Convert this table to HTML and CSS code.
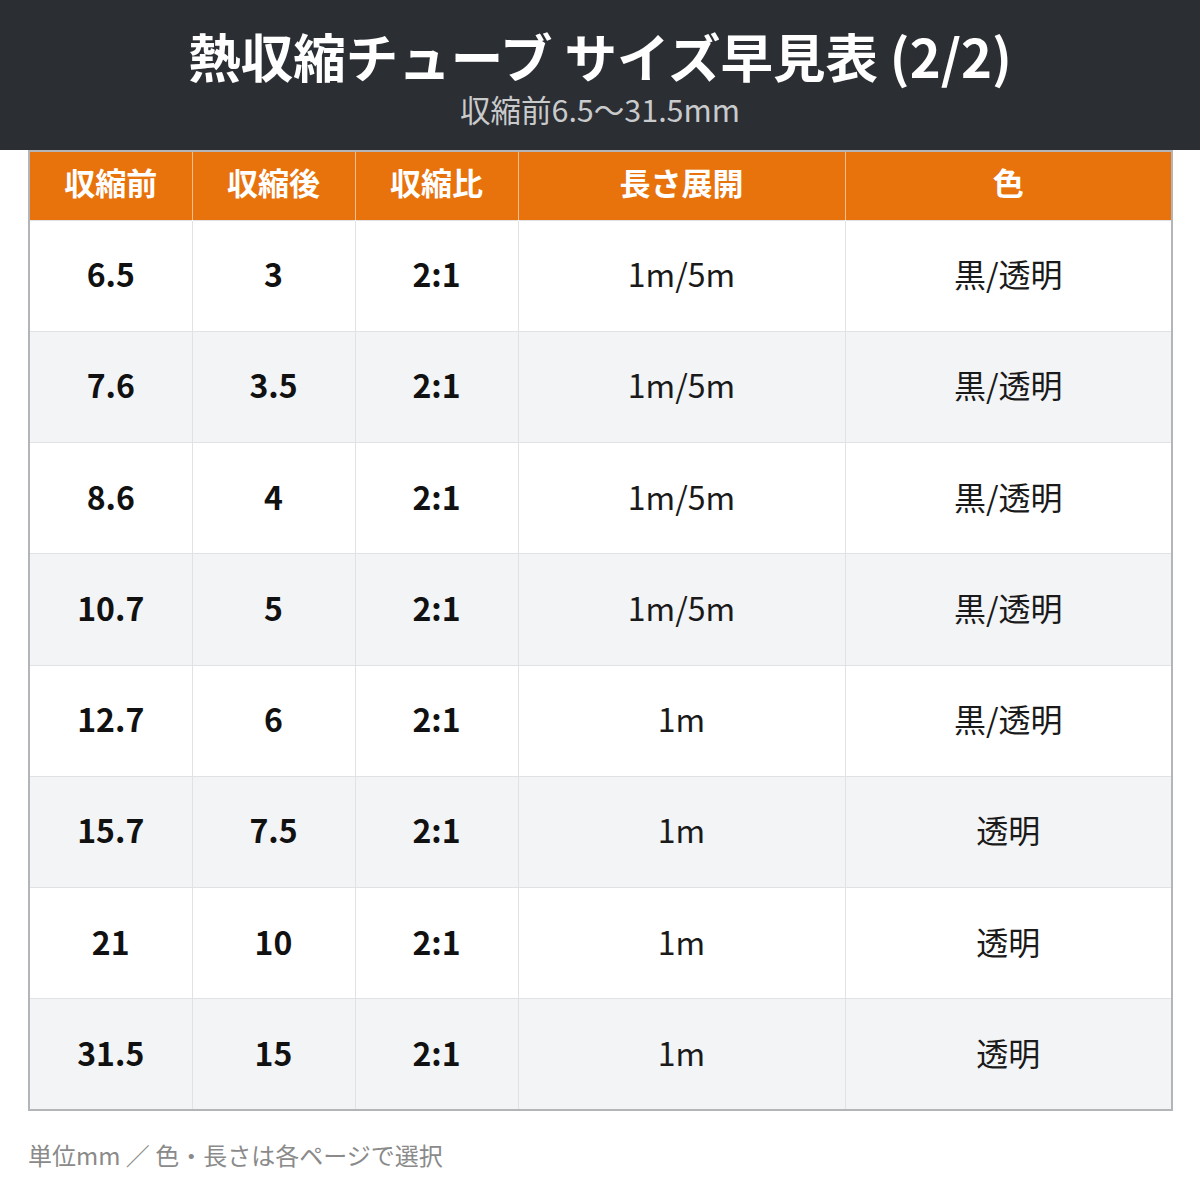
FILE: index.html
```html
<!DOCTYPE html>
<html lang="ja">
<head>
<meta charset="utf-8">
<link rel="stylesheet" href="styles.css">
</head>
<body>
<header class="hero">
  <h1 class="title">熱収縮チューブ サイズ早見表 (2/2)</h1>
  <p class="subtitle">収縮前6.5〜31.5mm</p>
</header>
<table class="sizes">
  <colgroup>
    <col class="c1"><col class="c1"><col class="c1"><col class="c2"><col class="c2">
  </colgroup>
  <thead>
    <tr><th>収縮前</th><th>収縮後</th><th>収縮比</th><th>長さ展開</th><th>色</th></tr>
  </thead>
  <tbody>
    <tr><td class="b">6.5</td><td class="b">3</td><td class="b">2:1</td><td>1m/5m</td><td>黒/透明</td></tr>
    <tr><td class="b">7.6</td><td class="b">3.5</td><td class="b">2:1</td><td>1m/5m</td><td>黒/透明</td></tr>
    <tr><td class="b">8.6</td><td class="b">4</td><td class="b">2:1</td><td>1m/5m</td><td>黒/透明</td></tr>
    <tr><td class="b">10.7</td><td class="b">5</td><td class="b">2:1</td><td>1m/5m</td><td>黒/透明</td></tr>
    <tr><td class="b">12.7</td><td class="b">6</td><td class="b">2:1</td><td>1m</td><td>黒/透明</td></tr>
    <tr><td class="b">15.7</td><td class="b">7.5</td><td class="b">2:1</td><td>1m</td><td>透明</td></tr>
    <tr><td class="b">21</td><td class="b">10</td><td class="b">2:1</td><td>1m</td><td>透明</td></tr>
    <tr><td class="b">31.5</td><td class="b">15</td><td class="b">2:1</td><td>1m</td><td>透明</td></tr>
  </tbody>
</table>
<p class="note">単位mm ／ 色・長さは各ページで選択</p>
</body>
</html>
```
FILE: styles.css
```css
* { box-sizing: border-box; }
html, body { margin: 0; padding: 0; background: #ffffff; }
body {
  font-family: "Noto Sans CJK JP", "Noto Sans", sans-serif;
  width: 1200px;
  height: 1200px;
  overflow: hidden;
}
.hero {
  background: #2b2e33;
  height: 150px;
  display: flex;
  flex-direction: column;
  align-items: center;
  padding-top: 24px;
}
.title {
  margin: 0;
  color: #ffffff;
  font-size: 52.5px;
  font-weight: 700;
  line-height: 1.2;
  letter-spacing: 0;
}
.subtitle {
  margin: 4px 0 0;
  color: #c9cacc;
  font-size: 30.5px;
  font-weight: 400;
  line-height: 1.2;
}
.sizes {
  margin-left: 28px;
  width: 1144px;
  border-collapse: collapse;
  table-layout: fixed;
  border: 2px solid #b3b5b8;
}
.c1 { width: 163px; }
.c2 { width: 327px; }
.sizes th {
  background: #e8720c;
  color: #ffffff;
  font-size: 31px;
  font-weight: 700;
  height: 69px;
  padding: 0 0 8px;
  border-left: 1px solid rgba(255, 255, 255, 0.55);
  text-align: center;
  vertical-align: middle;
}
.sizes th:first-child { border-left: none; }
.sizes td {
  height: 111.25px;
  padding: 0 0 5px;
  text-align: center;
  vertical-align: middle;
  font-size: 32px;
  font-weight: 400;
  color: #1a1a1a;
  border: 1px solid #e1e2e4;
}
.sizes td.b { font-weight: 700; color: #111111; }
.sizes tbody tr:nth-child(even) td { background: #f3f4f6; }
.sizes tbody tr td:first-child { border-left: none; }
.note {
  margin: 27px 0 0 28px;
  color: #8a8a8a;
  font-size: 24px;
  line-height: 1.4;
}
```
